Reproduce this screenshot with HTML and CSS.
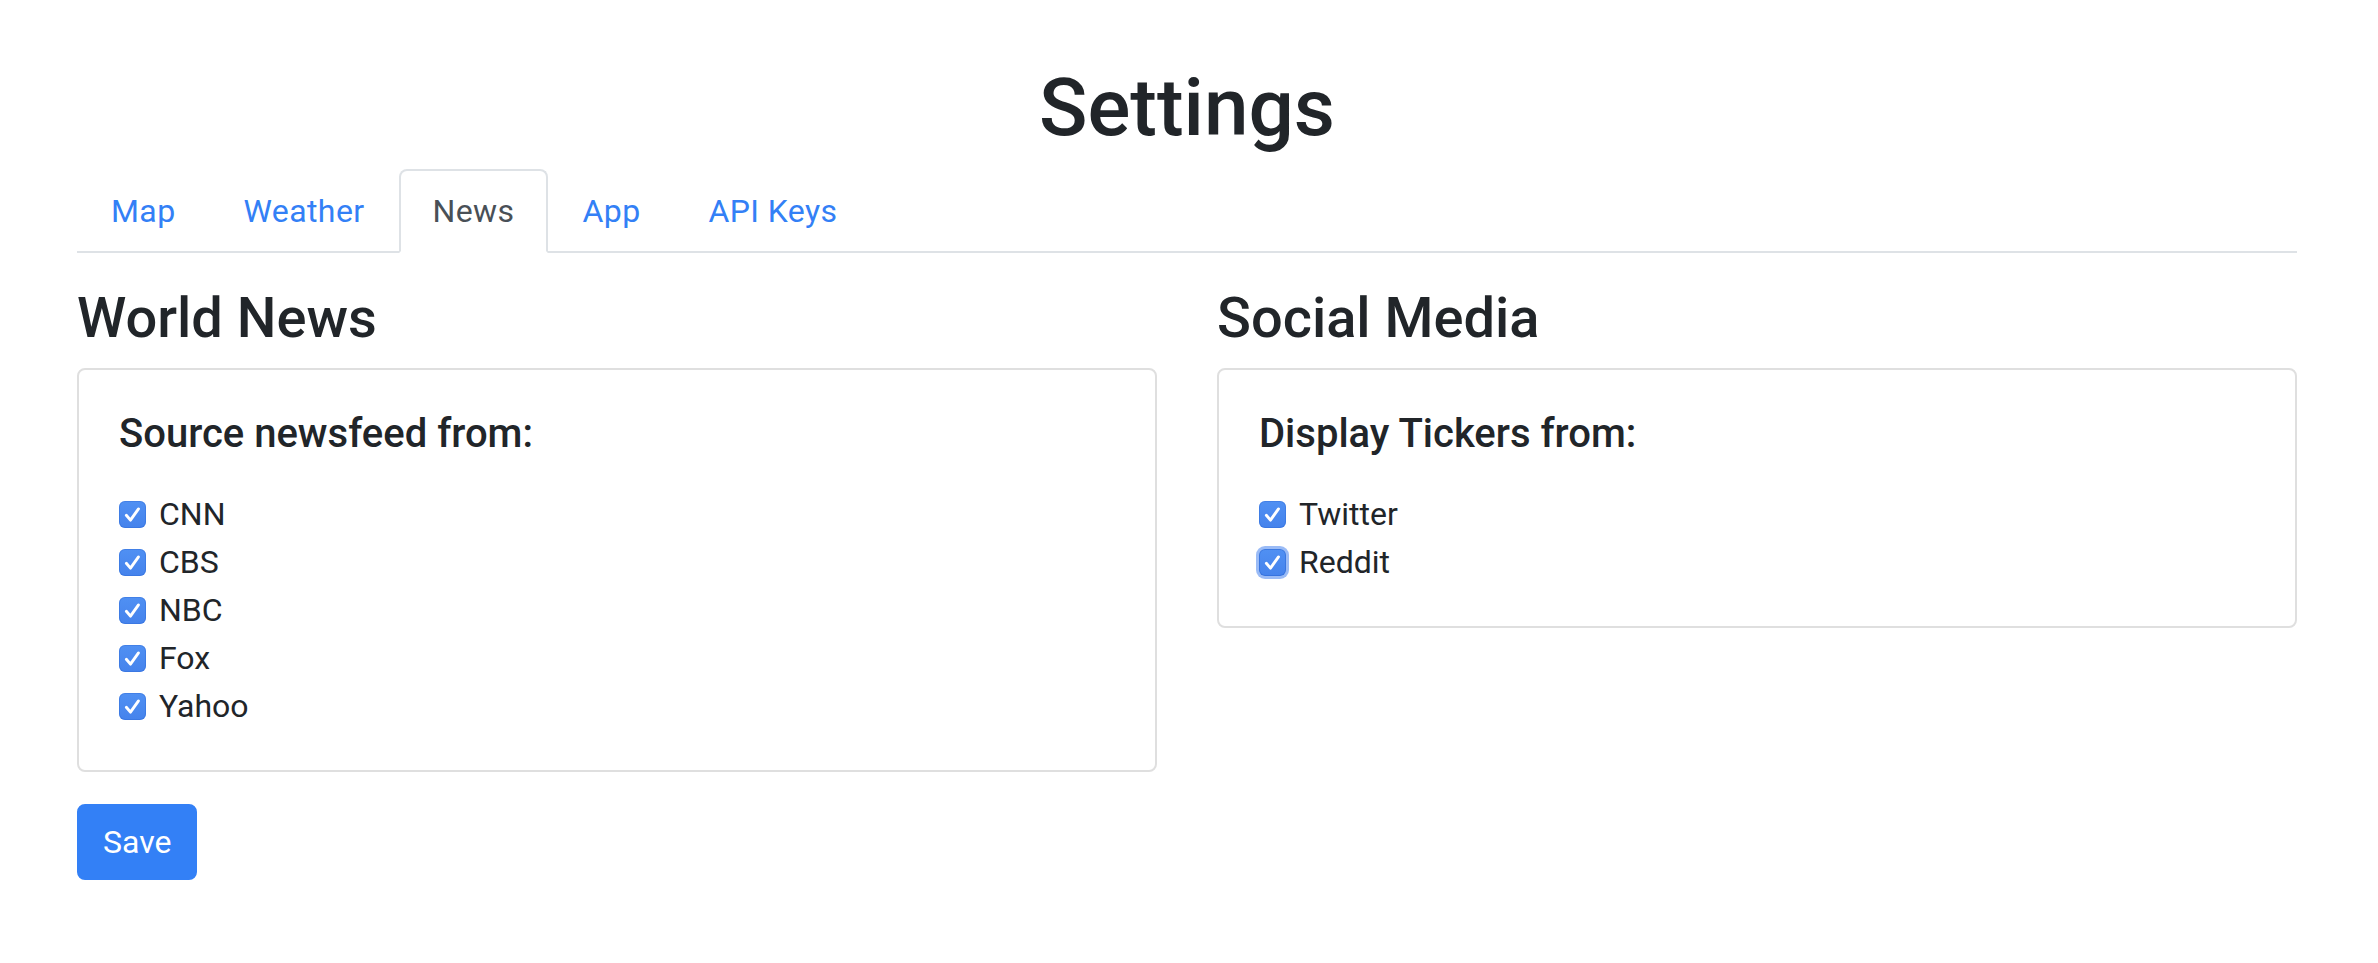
FILE: index.html
```html
<!DOCTYPE html>
<html lang="en">
<head>
<meta charset="utf-8">
<title>Settings</title>
<link rel="stylesheet" href="styles.css">
</head>
<body>
<div class="page">
  <div class="container">
    <h1 class="title">Settings</h1>
    <nav class="tabs">
      <a class="tab">Map</a>
      <a class="tab">Weather</a>
      <a class="tab active">News</a>
      <a class="tab">App</a>
      <a class="tab">API Keys</a>
    </nav>
    <div class="row">
      <section class="col">
        <h3 class="section-title">World News</h3>
        <div class="card">
          <h5 class="card-title">Source newsfeed from:</h5>
          <label class="check-row"><span class="box"><svg viewBox="0 0 28 28"><path d="M7.6 14.8 L11.9 19.8 L20.2 8.2" /></svg></span>CNN</label>
          <label class="check-row"><span class="box"><svg viewBox="0 0 28 28"><path d="M7.6 14.8 L11.9 19.8 L20.2 8.2" /></svg></span>CBS</label>
          <label class="check-row"><span class="box"><svg viewBox="0 0 28 28"><path d="M7.6 14.8 L11.9 19.8 L20.2 8.2" /></svg></span>NBC</label>
          <label class="check-row"><span class="box"><svg viewBox="0 0 28 28"><path d="M7.6 14.8 L11.9 19.8 L20.2 8.2" /></svg></span>Fox</label>
          <label class="check-row"><span class="box"><svg viewBox="0 0 28 28"><path d="M7.6 14.8 L11.9 19.8 L20.2 8.2" /></svg></span>Yahoo</label>
        </div>
        <button class="btn">Save</button>
      </section>
      <section class="col">
        <h3 class="section-title">Social Media</h3>
        <div class="card">
          <h5 class="card-title">Display Tickers from:</h5>
          <label class="check-row"><span class="box"><svg viewBox="0 0 28 28"><path d="M7.6 14.8 L11.9 19.8 L20.2 8.2" /></svg></span>Twitter</label>
          <label class="check-row"><span class="box focus"><svg viewBox="0 0 28 28"><path d="M7.6 14.8 L11.9 19.8 L20.2 8.2" /></svg></span>Reddit</label>
        </div>
      </section>
    </div>
  </div>
</div>
</body>
</html>
```

FILE: styles.css
```css
html, body {
  margin: 0;
  padding: 0;
  background: #ffffff;
}

body {
  font-family: Roboto, "Liberation Sans", Arial, sans-serif;
  font-size: 32px;
  line-height: 1.5;
  color: #212529;
}

.page {
  padding: 60px 0 0 77px;
}

.container {
  width: 2220px;
}

.title {
  margin: 0 0 13px;
  font-size: 80px;
  line-height: 96px;
  font-weight: 500;
  text-align: center;
}

.tabs {
  display: flex;
  border-bottom: 2px solid #dee2e6;
}

.tab {
  display: block;
  padding: 16px 32px;
  line-height: 48px;
  letter-spacing: 0.4px;
  border: 2px solid transparent;
  border-radius: 8px 8px 0 0;
  margin-bottom: -2px;
  color: #3380f6;
  text-decoration: none;
  cursor: pointer;
}

.tab.active {
  color: #495057;
  background: #ffffff;
  border-color: #dee2e6 #dee2e6 #ffffff;
}

.row {
  display: grid;
  grid-template-columns: 1fr 1fr;
  column-gap: 60px;
  margin-top: 32px;
  align-items: start;
}

.col {
  display: flex;
  flex-direction: column;
  align-items: flex-start;
}

.section-title {
  margin: 0 0 16px;
  font-size: 56px;
  line-height: 67px;
  font-weight: 500;
}

.card {
  align-self: stretch;
  border: 2px solid #dfdfdf;
  border-radius: 8px;
  padding: 40px;
}

.card-title {
  margin: 0 0 32px;
  font-size: 40px;
  line-height: 48px;
  font-weight: 500;
}

.check-row {
  display: flex;
  align-items: center;
  height: 48px;
  cursor: pointer;
}

.box {
  display: block;
  flex: none;
  width: 27px;
  height: 27px;
  margin-right: 13px;
  border-radius: 6px;
  background: linear-gradient(#5090f3, #4583ec);
  box-shadow: inset 0 0 0 1px rgba(40, 100, 210, 0.35);
}

.box svg {
  display: block;
  width: 27px;
  height: 27px;
}

.box path {
  fill: none;
  stroke: #ffffff;
  stroke-width: 3;
  stroke-linecap: round;
  stroke-linejoin: round;
}

.box.focus {
  box-shadow: inset 0 0 0 1px rgba(40, 100, 210, 0.5), 0 0 0 3px rgba(86, 142, 240, 0.6);
}

.btn {
  margin-top: 32px;
  padding: 12px 24px;
  font-family: inherit;
  font-size: 32px;
  line-height: 48px;
  color: #ffffff;
  background: #3380f6;
  border: 2px solid #3380f6;
  border-radius: 8px;
  cursor: pointer;
}
```
